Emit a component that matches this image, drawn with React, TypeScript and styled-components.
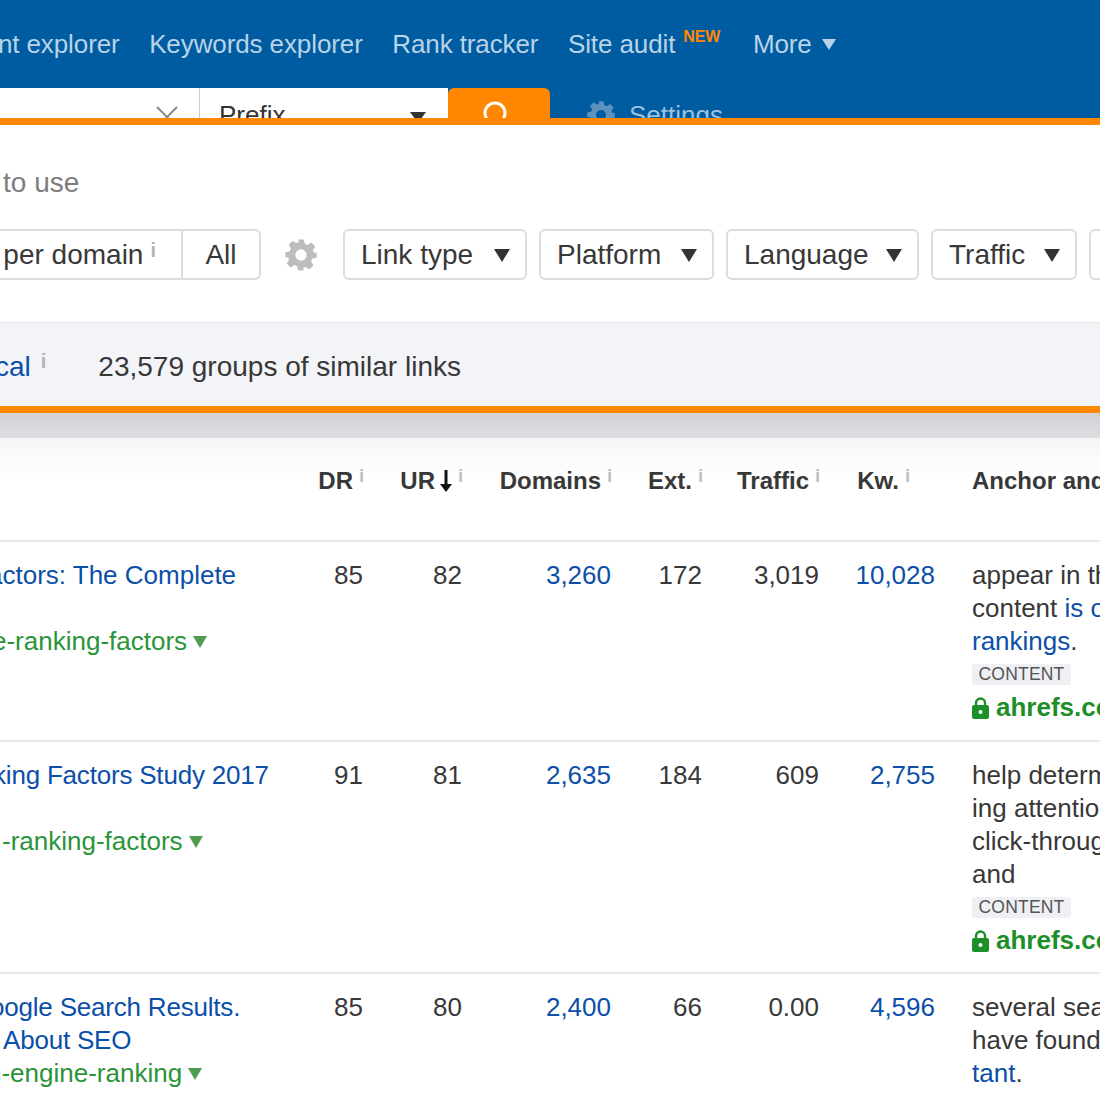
import React from 'react'
import styled, { createGlobalStyle } from 'styled-components'

const GlobalStyle = createGlobalStyle`
  html, body {
    margin: 0;
    padding: 0;
    background: #fff;
  }
  body {
    width: 1100px;
    height: 1100px;
    overflow: hidden;
    font-family: "Liberation Sans", Arial, sans-serif;
    font-size: 26px;
    color: #383838;
  }
`

const Page = styled.div`
  width: 1100px;
  height: 1100px;
  overflow: hidden;
`

const TopBar = styled.header`
  height: 118px;
  background: #005ca1;
  overflow: hidden;
  display: flex;
  flex-direction: column;
`

const Nav = styled.nav`
  display: flex;
  align-items: center;
  height: 88px;
  gap: 29.5px;
  margin-left: -71px;
  flex: none;
`

const NavItem = styled.span`
  font-size: 26px;
  letter-spacing: -0.1px;
  color: #b9d3e8;
  white-space: nowrap;
  display: flex;
  align-items: center;
`

const NewTag = styled.sup`
  font-size: 16px;
  font-weight: 700;
  color: #ff8800;
  margin: -14px 3px 0 8px;
  line-height: 1;
`

const MoreCaret = styled.i`
  width: 0;
  height: 0;
  margin-left: 10px;
  border-left: 7px solid transparent;
  border-right: 7px solid transparent;
  border-top: 11px solid #b9d3e8;
`

const SearchRow = styled.div`
  display: flex;
  height: 60px;
  flex: none;
`

const SearchInput = styled.div`
  width: 200px;
  background: #fff;
  display: flex;
  justify-content: flex-end;
  padding: 18px 21px 0 0;
  box-sizing: border-box;
  border-right: 1px solid #ccc;
`

const ModeSelect = styled.div`
  width: 248px;
  background: #fff;
  box-sizing: border-box;
  padding: 12px 22px 0 19px;
  display: flex;
  justify-content: space-between;
  color: #333;
  font-size: 26px;
`

const SelectCaret = styled.i`
  width: 0;
  height: 0;
  margin-top: 12px;
  border-left: 8px solid transparent;
  border-right: 8px solid transparent;
  border-top: 11px solid #333;
`

const SearchButton = styled.div`
  width: 102px;
  background: #ff8800;
  border-radius: 6px 6px 0 0;
  display: flex;
  justify-content: center;
  padding: 13px 8px 0 0;
  box-sizing: border-box;
`

const SettingsLink = styled.div`
  display: flex;
  gap: 13px;
  margin-left: 36px;
  padding-top: 12px;
  color: #b9d3e8;
  font-size: 26px;
  opacity: 0.85;
`

const OrangeRule = styled.div`
  height: 7px;
  background: #ff8800;
`

const FilterPanel = styled.section`
  height: 198px;
  background: #fff;
  box-sizing: border-box;
  padding-top: 41px;
  border-bottom: 1px solid #e9e9ec;
  font-size: 28px;
`

const Hint = styled.div`
  color: #7d7d7d;
  line-height: 33px;
  margin-left: 3px;
`

const FilterRow = styled.div`
  display: flex;
  align-items: center;
  gap: 12px;
  margin-top: 30px;
  height: 51px;
`

const Segmented = styled.div`
  display: flex;
  height: 51px;
  width: 261px;
  flex: none;
  box-sizing: border-box;
  border: 2px solid #dcdcdc;
  border-left: 0;
  border-radius: 0 6px 6px 0;
`

const SegmentLabel = styled.div`
  flex: 1;
  display: flex;
  align-items: center;
  justify-content: flex-end;
  padding: 1px 25px 0 0;
  border-right: 2px solid #dcdcdc;
  white-space: nowrap;
`

const InfoMark = styled.span<{ $top?: number; $gap: number }>`
  font-size: 20px;
  line-height: 1;
  font-weight: 700;
  color: #b4b4b4;
  margin: ${p => p.$top || 0}px 0 0 ${p => p.$gap}px;
  align-self: flex-start;
`

const SegmentEnd = styled.div`
  width: 76px;
  padding-top: 1px;
  display: flex;
  align-items: center;
  justify-content: center;
`

const GearSlot = styled.div`
  width: 55px;
  flex: none;
  display: flex;
  justify-content: center;
  margin-right: 3px;
`

const Dropdown = styled.div<{ $w: number }>`
  width: ${p => p.$w}px;
  flex: none;
  height: 51px;
  box-sizing: border-box;
  border: 2px solid #dcdcdc;
  border-radius: 6px;
  display: flex;
  align-items: center;
  justify-content: space-between;
  padding: 1px 15px 0 16px;
  white-space: nowrap;
`

const DropCaret = styled.i`
  width: 0;
  height: 0;
  border-left: 8px solid transparent;
  border-right: 8px solid transparent;
  border-top: 13px solid #333;
`

const SummaryBand = styled.section`
  height: 83px;
  box-sizing: border-box;
  padding-top: 5px;
  background: #f3f4f8;
  display: flex;
  align-items: center;
  font-size: 28px;
`

const SummaryLink = styled.a`
  color: #0b4fa8;
  margin-left: -5px;
  display: flex;
`

const SummaryText = styled.span`
  margin-left: 52px;
`

const Shade = styled.div`
  height: 25px;
  background: linear-gradient(#d1d2d6, #dddee2);
`

const HeadRow = styled.div`
  display: grid;
  grid-template-columns: 300px 63px 99px 149px 91px 117px 116px 1fr;
  height: 104px;
  box-sizing: border-box;
  padding-top: 28px;
  background: linear-gradient(#f5f5f5, #fff 40px);
  border-bottom: 2px solid #e9e9e9;
  font-weight: 700;
  line-height: 30px;
  font-size: 24px;
`

const HeadCell = styled.div<{ $left?: boolean; $pad?: number }>`
  display: flex;
  justify-content: ${p => (p.$left ? 'flex-start' : 'flex-end')};
  white-space: nowrap;
  ${p => p.$left && 'padding-left: 37px;'}
  ${p => p.$pad && `padding-right: ${p.$pad}px;`}
`

const HeadInfo = styled.span`
  width: 4px;
  font-size: 19px;
  color: #c0c0c0;
  line-height: 19px;
  margin-left: 6px;
`

const SortArrow = styled.svg`
  margin: 4px 0 0 5px;
`

const Row = styled.div<{ $h: number }>`
  display: grid;
  grid-template-columns: 300px 63px 99px 149px 91px 117px 116px 1fr;
  height: ${p => p.$h}px;
  box-sizing: border-box;
  padding-top: 17px;
  border-bottom: 2px solid #e9e9e9;
  line-height: 33px;
  overflow: hidden;
`

const TitleCell = styled.div`
  white-space: nowrap;
`

const Line = styled.div<{ $shift: number; $gap?: boolean; $tight?: boolean }>`
  margin-left: ${p => p.$shift}px;
  ${p => p.$gap && 'margin-top: 33px;'}
  ${p => p.$tight && 'letter-spacing: -0.2px;'}
  color: #0b4fa8;
`

const UrlLine = styled(Line)`
  color: #2a9438;
  display: flex;
  align-items: center;
`

const UrlCaret = styled.i`
  width: 0;
  height: 0;
  margin-left: 6px;
  border-left: 7px solid transparent;
  border-right: 7px solid transparent;
  border-top: 12px solid #4f9c50;
`

const Num = styled.div`
  text-align: right;
`

const NumLink = styled(Num)`
  color: #0b4fa8;
`

const AnchorCell = styled.div`
  padding-left: 37px;
  white-space: nowrap;
`

const AnchorLink = styled.span`
  color: #0b4fa8;
`

const Tag = styled.div`
  display: block;
  width: 99px;
  height: 21px;
  margin: 6px 0;
  background: #eff0f4;
  border-radius: 3px;
  color: #555;
  font-size: 17.5px;
  line-height: 21px;
  letter-spacing: 0.2px;
  text-align: center;
`

const Domain = styled.div`
  display: flex;
  align-items: center;
  gap: 7px;
  color: #1d8f29;
  font-weight: 700;
`

const Gear = ({ size, color }: { size: number; color: string }) => (
  <svg width={size} height={size} viewBox="0 0 24 24" fill={color}>
    <path d="M10 1h4l.7 3.100 1.900.8 2.700-1.700 2.800 2.800-1.700 2.700.8 1.900L23 10v4l-3.100.7-.8 1.900 1.700 2.700-2.800 2.800-2.700-1.700-1.900.8L14 23h-4l-.7-3.100-1.900-.8-2.700 1.700-2.800-2.800 1.700-2.700-.8-1.900L1 14v-4l3.100-.7.8-1.900L3.200 4.700 6 1.900l2.700 1.700 1.900-.8zM12 8a4 4 0 1 0 0 8 4 4 0 0 0 0-8z" fillRule="evenodd" />
  </svg>
)

const Lock = () => (
  <svg width="17" height="22" viewBox="0 0 17 22">
    <path d="M4 9V6a4.500 4.500 0 0 1 9 0v3" fill="none" stroke="#1d8f29" strokeWidth="2.400" />
    <rect x="0" y="8" width="17" height="14" rx="2" fill="#1d8f29" />
    <circle cx="8.500" cy="15" r="2" fill="#fff" />
  </svg>
)

const App = () => (
  <Page>
    <GlobalStyle />
    <TopBar>
      <Nav>
        <NavItem>Content explorer</NavItem>
        <NavItem>Keywords explorer</NavItem>
        <NavItem>Rank tracker</NavItem>
        <NavItem>
          Site audit<NewTag>NEW</NewTag>
        </NavItem>
        <NavItem>
          More<MoreCaret />
        </NavItem>
      </Nav>
      <SearchRow>
        <SearchInput>
          <svg width="22" height="22" viewBox="0 0 22 22" stroke="#8a8a8a" strokeWidth="2">
            <path d="M1 1l20 20M21 1L1 21" />
          </svg>
        </SearchInput>
        <ModeSelect>
          Prefix
          <SelectCaret />
        </ModeSelect>
        <SearchButton>
          <svg width="24" height="30" viewBox="0 0 24 30" fill="none" stroke="#fff" strokeWidth="3">
            <circle cx="12" cy="12" r="10" />
          </svg>
        </SearchButton>
        <SettingsLink>
          <Gear size={30} color="#6f9cc4" />
          Settings
        </SettingsLink>
      </SearchRow>
    </TopBar>
    <OrangeRule />
    <FilterPanel>
      <Hint>to use</Hint>
      <FilterRow>
        <Segmented>
          <SegmentLabel>
            per domain<InfoMark $top={8} $gap={7}>i</InfoMark>
          </SegmentLabel>
          <SegmentEnd>All</SegmentEnd>
        </Segmented>
        <GearSlot>
          <Gear size={34} color="#bdbdbd" />
        </GearSlot>
        <Dropdown $w={184}>
          Link type<DropCaret />
        </Dropdown>
        <Dropdown $w={175}>
          Platform<DropCaret />
        </Dropdown>
        <Dropdown $w={193}>
          Language<DropCaret />
        </Dropdown>
        <Dropdown $w={146}>
          Traffic<DropCaret />
        </Dropdown>
        <Dropdown $w={60} />
      </FilterRow>
    </FilterPanel>
    <SummaryBand>
      <SummaryLink>
        cal<InfoMark $gap={10}>i</InfoMark>
      </SummaryLink>
      <SummaryText>23,579 groups of similar links</SummaryText>
    </SummaryBand>
    <OrangeRule />
    <Shade />
    <HeadRow>
      <div />
      <HeadCell>DR<HeadInfo>i</HeadInfo></HeadCell>
      <HeadCell>
        UR
        <SortArrow width="12" height="22" viewBox="0 0 12 22" fill="#111">
          <path d="M4.500 0h3v14H12l-6 8-6-8h4.500z" />
        </SortArrow>
        <HeadInfo>i</HeadInfo>
      </HeadCell>
      <HeadCell>Domains<HeadInfo>i</HeadInfo></HeadCell>
      <HeadCell>Ext.<HeadInfo>i</HeadInfo></HeadCell>
      <HeadCell>Traffic<HeadInfo>i</HeadInfo></HeadCell>
      <HeadCell $pad={26}>Kw.<HeadInfo>i</HeadInfo></HeadCell>
      <HeadCell $left>Anchor and</HeadCell>
    </HeadRow>
    <Row $h={200}>
      <TitleCell>
        <Line $shift={-12}>actors: The Complete</Line>
        <UrlLine $shift={-8} $gap>e-ranking-factors<UrlCaret /></UrlLine>
      </TitleCell>
      <Num>85</Num>
      <Num>82</Num>
      <NumLink>3,260</NumLink>
      <Num>172</Num>
      <Num>3,019</Num>
      <NumLink>10,028</NumLink>
      <AnchorCell>
        appear in the
        <br />
        content <AnchorLink>is one</AnchorLink>
        <br />
        <AnchorLink>rankings</AnchorLink>.
        <Tag>CONTENT</Tag>
        <Domain><Lock />ahrefs.com</Domain>
      </AnchorCell>
    </Row>
    <Row $h={232}>
      <TitleCell>
        <Line $shift={-7} $tight>king Factors Study 2017</Line>
        <UrlLine $shift={2} $gap>-ranking-factors<UrlCaret /></UrlLine>
      </TitleCell>
      <Num>91</Num>
      <Num>81</Num>
      <NumLink>2,635</NumLink>
      <Num>184</Num>
      <Num>609</Num>
      <NumLink>2,755</NumLink>
      <AnchorCell>
        help determine
        <br />
        ing attention
        <br />
        click-through
        <br />
        and
        <Tag>CONTENT</Tag>
        <Domain><Lock />ahrefs.com</Domain>
      </AnchorCell>
    </Row>
    <Row $h={140}>
      <TitleCell>
        <Line $shift={-10} $tight>oogle Search Results.</Line>
        <Line $shift={3} $tight>About SEO</Line>
        <UrlLine $shift={-13}>h-engine-ranking<UrlCaret /></UrlLine>
      </TitleCell>
      <Num>85</Num>
      <Num>80</Num>
      <NumLink>2,400</NumLink>
      <Num>66</Num>
      <Num>0.00</Num>
      <NumLink>4,596</NumLink>
      <AnchorCell>
        several search
        <br />
        have found
        <br />
        <AnchorLink>tant</AnchorLink>.
      </AnchorCell>
    </Row>
  </Page>
)

export default App
